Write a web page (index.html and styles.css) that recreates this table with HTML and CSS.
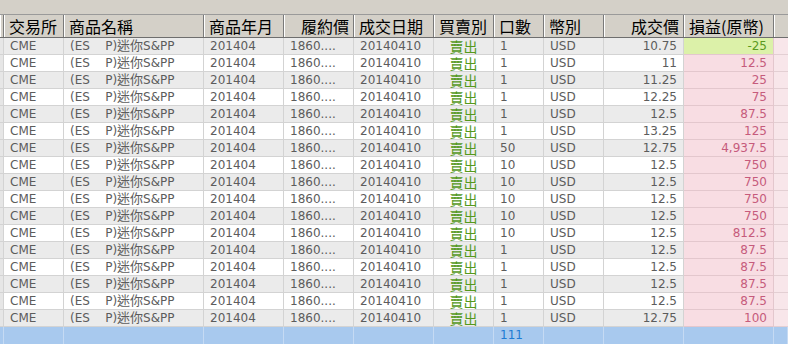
FILE: index.html
```html
<!DOCTYPE html>
<html>
<head>
<meta charset="utf-8">
<link rel="stylesheet" href="styles.css">
</head>
<body>
<div class="strip"></div>
<div class="grid">
  <div class="row head">
    <div class="c"></div>
    <div class="c">交易所</div>
    <div class="c">商品名稱</div>
    <div class="c">商品年月</div>
    <div class="c r">履約價</div>
    <div class="c">成交日期</div>
    <div class="c">買賣別</div>
    <div class="c">口數</div>
    <div class="c">幣別</div>
    <div class="c r">成交價</div>
    <div class="c">損益(原幣)</div>
    <div class="c"></div>
  </div>
</div>
<div class="grid" id="body"></div>
<div class="row total">
  <div class="c"></div><div class="c"></div><div class="c"></div><div class="c"></div><div class="c"></div><div class="c"></div><div class="c"></div>
  <div class="c qty">111</div>
  <div class="c"></div><div class="c"></div><div class="c"></div><div class="c"></div>
</div>
<script src="app.js"></script>
</body>
</html>
```

FILE: app.js
```js
var data = [
  ["1","10.75","-25"],
  ["1","11","12.5"],
  ["1","11.25","25"],
  ["1","12.25","75"],
  ["1","12.5","87.5"],
  ["1","13.25","125"],
  ["50","12.75","4,937.5"],
  ["10","12.5","750"],
  ["10","12.5","750"],
  ["10","12.5","750"],
  ["10","12.5","750"],
  ["10","12.5","812.5"],
  ["1","12.5","87.5"],
  ["1","12.5","87.5"],
  ["1","12.5","87.5"],
  ["1","12.5","87.5"],
  ["1","12.75","100"]
];
var body = document.getElementById("body");
data.forEach(function (d, i) {
  var row = document.createElement("div");
  row.className = "row data " + (i % 2 === 0 ? "odd" : "even");
  var pl = d[2].charAt(0) === "-" ? "pl loss" : "pl";
  row.innerHTML =
    '<div class="c"></div>' +
    '<div class="c">CME</div>' +
    '<div class="c pre">(ES    P)<span class="cjk">迷你</span>S&amp;PP</div>' +
    '<div class="c">201404</div>' +
    '<div class="c">1860....</div>' +
    '<div class="c">20140410</div>' +
    '<div class="c side">賣出</div>' +
    '<div class="c">' + d[0] + '</div>' +
    '<div class="c">USD</div>' +
    '<div class="c r">' + d[1] + '</div>' +
    '<div class="c r ' + pl + '">' + d[2] + '</div>' +
    '<div class="c tail"></div>';
  body.appendChild(row);
});
```

FILE: styles.css
```css
html, body {
  margin: 0;
  padding: 0;
  width: 788px;
  height: 344px;
  overflow: hidden;
  background: #d4d0c8;
  font-family: "DejaVu Sans", Verdana, "Noto Sans CJK TC", sans-serif;
}
.strip {
  height: 14px;
  background: #d4d0c8;
  border-bottom: 1px solid #9a9a9a;
}
.row {
  display: grid;
  grid-template-columns: 4px 60px 140px 80px 70px 80px 60px 50px 60px 80px 90px 14px;
}
.c {
  box-sizing: border-box;
  white-space: nowrap;
}
.head {
  height: 23px;
  background: #d4d0c8;
  border-bottom: 1px solid #6e6e6e;
  box-sizing: border-box;
}
.head .c {
  border-right: 1px solid #7a7a7a;
  box-shadow: inset 1px 0 0 #ffffff;
  font-family: "Noto Sans CJK TC", sans-serif;
  font-size: 16px;
  line-height: 22px;
  color: #000;
  padding: 0 5px;
}
.head .c:first-child { padding: 0; }
.head .c:last-child { border-right: none; }
.head .c.r { text-align: right; padding-right: 4px; }
.data {
  height: 17px;
  font-size: 12px;
  color: #5c5c5c;
}
.data .c {
  border-right: 1px solid #d3d3d3;
  border-bottom: 1px solid #d3d3d3;
  line-height: 16px;
  padding: 0 6px;
}
.data .c:first-child { padding: 0; background: #e6e6e6; }
.odd { background: #ebebeb; }
.even { background: #ffffff; }
.pre { white-space: pre; }
.cjk {
  font-family: "Noto Sans CJK TC", sans-serif;
  font-size: 13px;
  line-height: 14px;
}
.data .side {
  font-family: "Noto Sans CJK TC", sans-serif;
  font-size: 14px;
  line-height: 16px;
  color: #55991c;
  text-align: center;
  padding: 0;
}
.data .r { text-align: right; padding-right: 6px; }
.data .pl {
  background: #f8dde3;
  color: #c65b7c;
  border-right-color: #e3c7cd;
  border-bottom-color: #e3c7cd;
}
.data .pl.loss {
  background: #dcf1a9;
  color: #5b9a1f;
}
.data .tail {
  background: #f8e6ea;
  border-right: none;
  border-bottom-color: #e3cfd3;
}
.total {
  height: 17px;
  background: #a8c9ee;
  font-size: 12px;
}
.total .c {
  border-right: 1px solid #c5daf3;
  line-height: 17px;
  padding: 0 6px;
}
.total .c:first-child { padding: 0; }
.total .qty { color: #1f7bd3; }
```
